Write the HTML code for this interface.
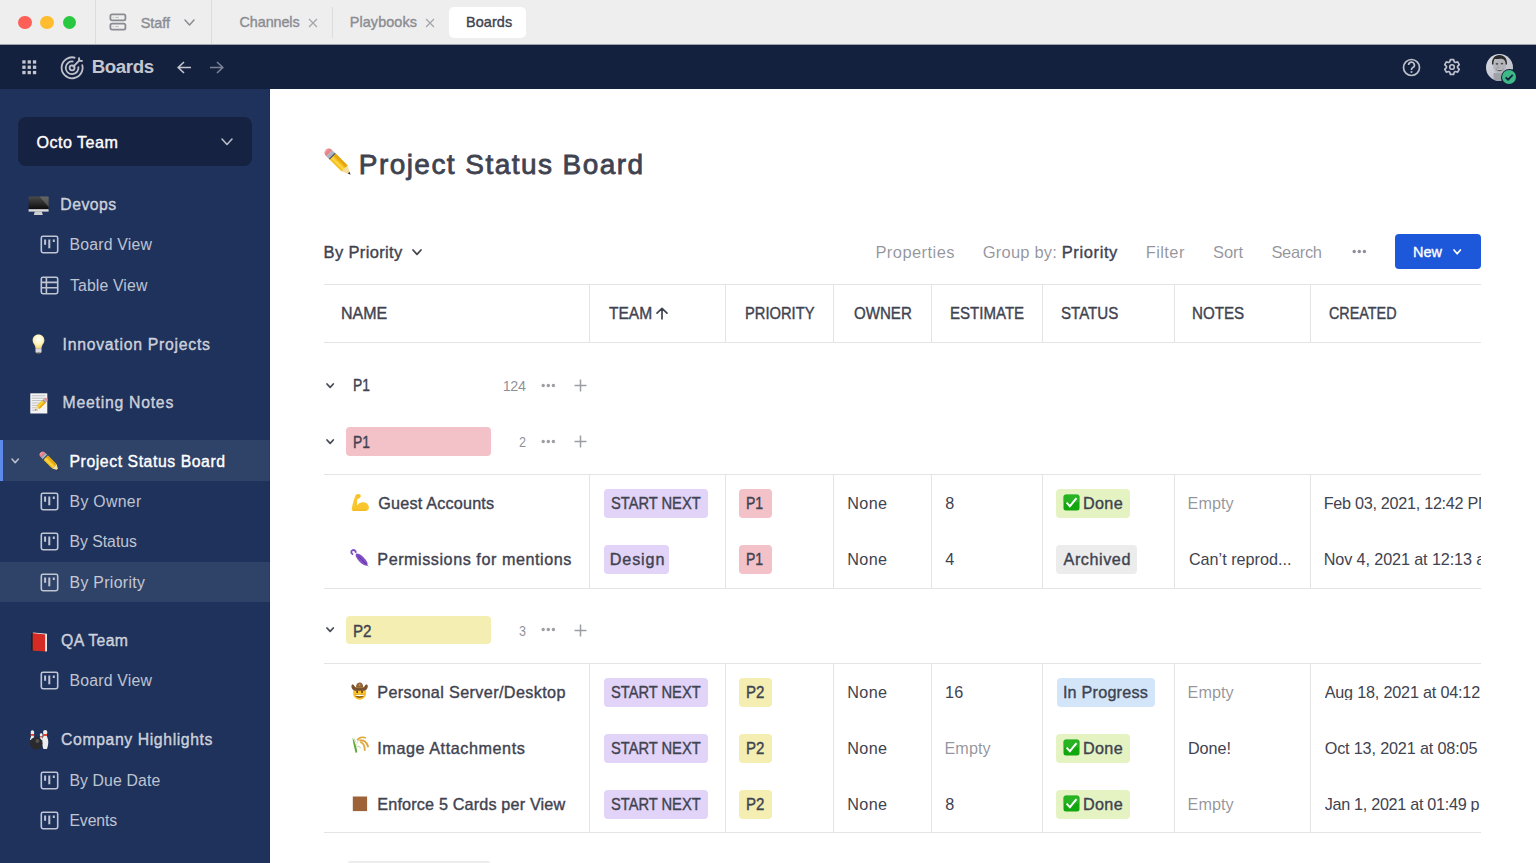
<!DOCTYPE html>
<html><head><meta charset="utf-8"><style>
*{margin:0;padding:0;box-sizing:border-box}
html,body{width:1536px;height:863px;overflow:hidden;background:#fff;font-family:"Liberation Sans",sans-serif}
.t{position:absolute;white-space:nowrap;line-height:1;transform-origin:0 0}
.box{position:absolute}
.ic{position:absolute;overflow:visible}
</style></head><body>
<div class="box" style="left:0;top:0;width:1536px;height:44px;background:#eeeeee"></div>
<div class="box" style="left:0;top:44px;width:1536px;height:1px;background:#a0a3ab"></div>
<div class="box" style="left:0;top:45px;width:1536px;height:44px;background:#14213e"></div>
<div class="box" style="left:0;top:89px;width:270px;height:774px;background:#1e325c"></div>
<div class="box" style="left:269px;top:89px;width:1px;height:774px;background:#1a2d55"></div>
<!-- traffic lights -->
<div class="box" style="left:18px;top:15.7px;width:13.6px;height:13.6px;border-radius:50%;background:#fe5f57"></div>
<div class="box" style="left:40.2px;top:15.7px;width:13.6px;height:13.6px;border-radius:50%;background:#febc2e"></div>
<div class="box" style="left:62.9px;top:15.7px;width:13.6px;height:13.6px;border-radius:50%;background:#28c840"></div>
<div class="box" style="left:95px;top:0;width:1px;height:44px;background:#dcdcdc"></div>
<div class="box" style="left:211px;top:0;width:1px;height:44px;background:#dcdcdc"></div>
<div class="box" style="left:332px;top:7px;width:1px;height:31px;background:#dcdcdc"></div>
<svg class="ic" style="left:109px;top:13.2px" width="18" height="18" viewBox="0 0 18 18"><rect x="1.4" y="1.3" width="15" height="6.1" rx="1.6" fill="none" stroke="#8b8c93" stroke-width="1.8"/><rect x="1.4" y="10.6" width="15" height="6.1" rx="1.6" fill="none" stroke="#8b8c93" stroke-width="1.8"/><path d="M3.8 4.4h1M6.4 4.4h3.2M3.8 13.6h1M6.4 13.6h3.2" stroke="#b0b1b6" stroke-width="0.9"/></svg>
<svg class="ic" style="left:182.5px;top:18px" width="13" height="9" viewBox="-2 -2 13 9"><path d="M0 0L4.5 5L9 0" fill="none" stroke="#8b8c93" stroke-width="1.5" stroke-linecap="round" stroke-linejoin="round"/></svg>
<svg class="ic" style="left:307.5px;top:17.5px" width="10" height="10" viewBox="0 0 10 10"><path d="M1 1L9 9M9 1L1 9" stroke="#a3a4aa" stroke-width="1.2"/></svg>
<svg class="ic" style="left:424.5px;top:17.5px" width="10" height="10" viewBox="0 0 10 10"><path d="M1 1L9 9M9 1L1 9" stroke="#a3a4aa" stroke-width="1.2"/></svg>
<div class="box" style="left:448.5px;top:6.7px;width:77.3px;height:31.4px;border-radius:5px;background:#ffffff"></div>
<!-- header icons -->
<svg class="ic" style="left:22px;top:60px" width="15" height="15" viewBox="0 0 15 15"><g fill="#c3c6cf"><rect x="0.3" y="0.3" width="3.3" height="3.3"/><rect x="5.6" y="0.3" width="3.3" height="3.3"/><rect x="10.9" y="0.3" width="3.3" height="3.3"/><rect x="0.3" y="5.6" width="3.3" height="3.3"/><rect x="5.6" y="5.6" width="3.3" height="3.3"/><rect x="10.9" y="5.6" width="3.3" height="3.3"/><rect x="0.3" y="10.9" width="3.3" height="3.3"/><rect x="5.6" y="10.9" width="3.3" height="3.3"/><rect x="10.9" y="10.9" width="3.3" height="3.3"/></g></svg>
<svg class="ic" style="left:60px;top:55.5px" width="24" height="24" viewBox="0 0 24 24"><g fill="none" stroke="#bfc2cc" stroke-width="1.8" stroke-linecap="butt"><path d="M22.09 8.56A10.5 10.5 0 1 1 15.34 1.81 M18.36 10.47A6.4 6.4 0 1 1 13.43 5.54"/><circle cx="12.1" cy="11.8" r="2.5"/><path d="M13.30 10.60L19.6 4.2" stroke-linecap="round"/><path d="M18.9 1.4L19.2 4.7L22.6 5" stroke-linejoin="miter"/></g></svg>
<svg class="ic" style="left:177px;top:61px" width="15" height="13" viewBox="0 0 15 13"><path d="M14 6.5H1.5M7 1L1.2 6.5L7 12" fill="none" stroke="#c3c6cf" stroke-width="1.6"/></svg>
<svg class="ic" style="left:209px;top:61px" width="15" height="13" viewBox="0 0 15 13"><path d="M1 6.5H13.5M8 1L13.8 6.5L8 12" fill="none" stroke="#7b8296" stroke-width="1.6"/></svg>
<svg class="ic" style="left:1402.1px;top:57.9px" width="19" height="19" viewBox="0 0 19 19"><circle cx="9.5" cy="9.5" r="8" fill="none" stroke="#bcc0cb" stroke-width="1.7"/><path d="M6.6 7.1a2.9 2.9 0 1 1 4.3 2.5c-.9.5-1.4 1-1.4 2v.5" fill="none" stroke="#bcc0cb" stroke-width="1.7"/><circle cx="9.5" cy="14" r="1.05" fill="#bcc0cb"/></svg>
<svg class="ic" style="left:1443px;top:58.4px" width="18" height="18" viewBox="0 0 18 18"><path d="M6.72 3.88 L7.42 1.57 L10.58 1.57 L11.28 3.88 L12.29 4.47 L14.65 3.91 L16.23 6.65 L14.57 8.41 L14.57 9.59 L16.23 11.35 L14.65 14.09 L12.29 13.53 L11.28 14.12 L10.58 16.43 L7.42 16.43 L6.72 14.12 L5.71 13.53 L3.35 14.09 L1.77 11.35 L3.43 9.59 L3.43 8.41 L1.77 6.65 L3.35 3.91 L5.71 4.47Z" fill="none" stroke="#bcc0cb" stroke-width="1.7" stroke-linejoin="round"/><circle cx="9" cy="9" r="2.3" fill="none" stroke="#bcc0cb" stroke-width="1.6"/></svg>
<svg class="ic" style="left:1485.5px;top:53.6px" width="27" height="27" viewBox="0 0 27 27"><defs><clipPath id="av"><circle cx="13.5" cy="13.5" r="13.5"/></clipPath><linearGradient id="avbg" x1="0" y1="0" x2="1" y2="1"><stop offset="0" stop-color="#d6d9e2"/><stop offset="1" stop-color="#b9bcc6"/></linearGradient></defs><g clip-path="url(#av)"><rect width="27" height="27" fill="url(#avbg)"/><path d="M7.6 19c-.4 3 .2 6 .8 8h8c.4-2 .6-5 .2-8z" fill="#9fa1a8"/><ellipse cx="13.6" cy="11.6" rx="6.4" ry="8" fill="#b4b5bb"/><path d="M6 10.5C5.4 5.2 8.6 1 13.4 1c4.8 0 8 3.4 7.6 9.6l-1.4-.2c.2-3.2-1.6-5.4-4.2-5.6-2.4-.2-4.6.4-6.6.2-.8 1.2-1.4 3-1.4 5.6z" fill="#2b2a2c"/><ellipse cx="11" cy="9.8" rx="1.3" ry="0.9" fill="#4a4a4e"/><ellipse cx="16" cy="9.6" rx="1.3" ry="0.9" fill="#4a4a4e"/><path d="M9.8 14.2c2.4 1.8 5.4 1.8 7.8 0-.6 2-2.2 3-3.9 3s-3.3-1-3.9-3z" fill="#5c5c61"/><path d="M10.4 14.5c2 1 4.6 1 6.6 0l-.4.9c-1.8.6-4 .6-5.8 0z" fill="#e4e4e8"/><path d="M12 11.5l-.6 2.2h2" stroke="#8f9096" stroke-width="0.6" fill="none"/></g></svg>
<div class="box" style="left:1500.5px;top:68.5px;width:17.5px;height:17.5px;border-radius:50%;background:#14213e"></div>
<div class="box" style="left:1502.2px;top:70.2px;width:14.2px;height:14.2px;border-radius:50%;background:#3db887"></div>
<svg class="ic" style="left:1502.2px;top:70.2px" width="14.2" height="14.2" viewBox="0 0 14 14"><path d="M3.6 7.2l2.4 2.4 4.6-4.8" fill="none" stroke="#14213e" stroke-width="1.8"/></svg>
<!-- sidebar -->
<div class="box" style="left:18px;top:116.8px;width:233.7px;height:49.4px;border-radius:8px;background:#162241"></div>
<svg class="ic" style="left:220px;top:137px" width="14" height="9.5" viewBox="-2 -2 14 9.5"><path d="M0 0L5.0 5.5L10 0" fill="none" stroke="#b7bcc8" stroke-width="1.6" stroke-linecap="round" stroke-linejoin="round"/></svg>
<div class="box" style="left:0;top:440px;width:270px;height:40.6px;background:rgba(255,255,255,0.08)"></div>
<div class="box" style="left:0;top:440px;width:3px;height:40.6px;background:#5d89ea"></div>
<div class="box" style="left:0;top:562px;width:270px;height:40px;background:rgba(255,255,255,0.08)"></div>
<svg class="ic" style="left:10.4px;top:457.0px" width="10.4" height="7.6" viewBox="-2 -2 10.4 7.6"><path d="M0 0L3.2 3.6L6.4 0" fill="none" stroke="#b7bcc8" stroke-width="1.6" stroke-linecap="round" stroke-linejoin="round"/></svg>
<svg class="ic" style="left:40px;top:235.0px" width="19" height="19" viewBox="0 0 19 19"><rect x="1.3" y="1.3" width="16.4" height="16.4" rx="1.6" fill="none" stroke="#c0c5d1" stroke-width="1.6"/><rect x="4.1" y="4.5" width="2" height="5.3" fill="#c0c5d1"/><rect x="8.3" y="4.5" width="2" height="8.8" fill="#c0c5d1"/><rect x="12.8" y="4.5" width="2" height="2.5" fill="#c0c5d1"/></svg><svg class="ic" style="left:40px;top:492.0px" width="19" height="19" viewBox="0 0 19 19"><rect x="1.3" y="1.3" width="16.4" height="16.4" rx="1.6" fill="none" stroke="#c0c5d1" stroke-width="1.6"/><rect x="4.1" y="4.5" width="2" height="5.3" fill="#c0c5d1"/><rect x="8.3" y="4.5" width="2" height="8.8" fill="#c0c5d1"/><rect x="12.8" y="4.5" width="2" height="2.5" fill="#c0c5d1"/></svg><svg class="ic" style="left:40px;top:532.0px" width="19" height="19" viewBox="0 0 19 19"><rect x="1.3" y="1.3" width="16.4" height="16.4" rx="1.6" fill="none" stroke="#c0c5d1" stroke-width="1.6"/><rect x="4.1" y="4.5" width="2" height="5.3" fill="#c0c5d1"/><rect x="8.3" y="4.5" width="2" height="8.8" fill="#c0c5d1"/><rect x="12.8" y="4.5" width="2" height="2.5" fill="#c0c5d1"/></svg><svg class="ic" style="left:40px;top:572.5px" width="19" height="19" viewBox="0 0 19 19"><rect x="1.3" y="1.3" width="16.4" height="16.4" rx="1.6" fill="none" stroke="#c0c5d1" stroke-width="1.6"/><rect x="4.1" y="4.5" width="2" height="5.3" fill="#c0c5d1"/><rect x="8.3" y="4.5" width="2" height="8.8" fill="#c0c5d1"/><rect x="12.8" y="4.5" width="2" height="2.5" fill="#c0c5d1"/></svg><svg class="ic" style="left:40px;top:671.3000000000001px" width="19" height="19" viewBox="0 0 19 19"><rect x="1.3" y="1.3" width="16.4" height="16.4" rx="1.6" fill="none" stroke="#c0c5d1" stroke-width="1.6"/><rect x="4.1" y="4.5" width="2" height="5.3" fill="#c0c5d1"/><rect x="8.3" y="4.5" width="2" height="8.8" fill="#c0c5d1"/><rect x="12.8" y="4.5" width="2" height="2.5" fill="#c0c5d1"/></svg><svg class="ic" style="left:40px;top:770.5px" width="19" height="19" viewBox="0 0 19 19"><rect x="1.3" y="1.3" width="16.4" height="16.4" rx="1.6" fill="none" stroke="#c0c5d1" stroke-width="1.6"/><rect x="4.1" y="4.5" width="2" height="5.3" fill="#c0c5d1"/><rect x="8.3" y="4.5" width="2" height="8.8" fill="#c0c5d1"/><rect x="12.8" y="4.5" width="2" height="2.5" fill="#c0c5d1"/></svg><svg class="ic" style="left:40px;top:810.6px" width="19" height="19" viewBox="0 0 19 19"><rect x="1.3" y="1.3" width="16.4" height="16.4" rx="1.6" fill="none" stroke="#c0c5d1" stroke-width="1.6"/><rect x="4.1" y="4.5" width="2" height="5.3" fill="#c0c5d1"/><rect x="8.3" y="4.5" width="2" height="8.8" fill="#c0c5d1"/><rect x="12.8" y="4.5" width="2" height="2.5" fill="#c0c5d1"/></svg><svg class="ic" style="left:40px;top:275.59999999999997px" width="19" height="19" viewBox="0 0 19 19"><rect x="1.3" y="1.3" width="16.4" height="16.4" rx="1.6" fill="none" stroke="#c0c5d1" stroke-width="1.6"/><path d="M1.3 6.4H17.7M1.3 11.8H17.7M6.4 1.3V17.7" stroke="#c0c5d1" stroke-width="1.6"/></svg>
<!-- main -->
<div class="box" style="left:1394.7px;top:233.9px;width:86.4px;height:35.6px;border-radius:4px;background:#1c58d9"></div>
<svg class="ic" style="left:1451.8px;top:247.6px" width="10.4" height="7.8" viewBox="-2 -2 10.4 7.8"><path d="M0 0L3.2 3.8L6.4 0" fill="none" stroke="#ffffff" stroke-width="1.7" stroke-linecap="round" stroke-linejoin="round"/></svg>
<svg class="ic" style="left:411px;top:247.6px" width="12" height="8.4" viewBox="-2 -2 12 8.4"><path d="M0 0L4.0 4.4L8 0" fill="none" stroke="#44474f" stroke-width="1.8" stroke-linecap="round" stroke-linejoin="round"/></svg>
<svg class="ic" style="left:1351.5px;top:249px" width="16" height="5" viewBox="0 0 16 5"><circle cx="2.2" cy="2.5" r="1.7" fill="#8c8f98"/><circle cx="7.3" cy="2.5" r="1.7" fill="#8c8f98"/><circle cx="12.4" cy="2.5" r="1.7" fill="#8c8f98"/></svg>
<svg class="ic" style="left:655px;top:307px" width="14" height="13" viewBox="0 0 14 13"><path d="M2 6.2L7 1.3L12 6.2M7 1.3V11.8" fill="none" stroke="#3f4350" stroke-width="1.7" stroke-linecap="round" stroke-linejoin="round"/></svg>
<div class="box" style="left:324px;top:283.5px;width:1157px;height:1px;background:#e4e4e6"></div><div class="box" style="left:324px;top:342px;width:1157px;height:1px;background:#e4e4e6"></div><div class="box" style="left:324px;top:474px;width:1157px;height:1px;background:#e4e4e6"></div><div class="box" style="left:324px;top:587.5px;width:1157px;height:1px;background:#e4e4e6"></div><div class="box" style="left:324px;top:663px;width:1157px;height:1px;background:#e4e4e6"></div><div class="box" style="left:324px;top:832px;width:1157px;height:1px;background:#e4e4e6"></div><div class="box" style="left:589px;top:284px;width:1px;height:58px;background:#e4e4e6"></div><div class="box" style="left:589px;top:474.5px;width:1px;height:113.0px;background:#e4e4e6"></div><div class="box" style="left:589px;top:663.5px;width:1px;height:168.5px;background:#e4e4e6"></div><div class="box" style="left:725px;top:284px;width:1px;height:58px;background:#e4e4e6"></div><div class="box" style="left:725px;top:474.5px;width:1px;height:113.0px;background:#e4e4e6"></div><div class="box" style="left:725px;top:663.5px;width:1px;height:168.5px;background:#e4e4e6"></div><div class="box" style="left:833px;top:284px;width:1px;height:58px;background:#e4e4e6"></div><div class="box" style="left:833px;top:474.5px;width:1px;height:113.0px;background:#e4e4e6"></div><div class="box" style="left:833px;top:663.5px;width:1px;height:168.5px;background:#e4e4e6"></div><div class="box" style="left:931px;top:284px;width:1px;height:58px;background:#e4e4e6"></div><div class="box" style="left:931px;top:474.5px;width:1px;height:113.0px;background:#e4e4e6"></div><div class="box" style="left:931px;top:663.5px;width:1px;height:168.5px;background:#e4e4e6"></div><div class="box" style="left:1042px;top:284px;width:1px;height:58px;background:#e4e4e6"></div><div class="box" style="left:1042px;top:474.5px;width:1px;height:113.0px;background:#e4e4e6"></div><div class="box" style="left:1042px;top:663.5px;width:1px;height:168.5px;background:#e4e4e6"></div><div class="box" style="left:1173.5px;top:284px;width:1px;height:58px;background:#e4e4e6"></div><div class="box" style="left:1173.5px;top:474.5px;width:1px;height:113.0px;background:#e4e4e6"></div><div class="box" style="left:1173.5px;top:663.5px;width:1px;height:168.5px;background:#e4e4e6"></div><div class="box" style="left:1309.5px;top:284px;width:1px;height:58px;background:#e4e4e6"></div><div class="box" style="left:1309.5px;top:474.5px;width:1px;height:113.0px;background:#e4e4e6"></div><div class="box" style="left:1309.5px;top:663.5px;width:1px;height:168.5px;background:#e4e4e6"></div>
<div class="box" style="left:346.2px;top:426.8px;width:144.8px;height:29.30000000000001px;background:#f3c1c8;border-radius:4px"></div><div class="box" style="left:346.2px;top:615.8px;width:144.8px;height:28.700000000000045px;background:#f4eeb3;border-radius:4px"></div><div class="box" style="left:603.5px;top:488.5px;width:104.5px;height:29.5px;background:#e2d3f8;border-radius:4px"></div><div class="box" style="left:739.4px;top:488.5px;width:32.60000000000002px;height:29.5px;background:#f3c1c8;border-radius:4px"></div><div class="box" style="left:1056.3px;top:488.5px;width:74.20000000000005px;height:29.5px;background:#e5f3c3;border-radius:4px"></div><svg class="ic" style="left:1062.5px;top:493.8px" width="17" height="17" viewBox="0 0 17 17"><rect x="0.5" y="0.5" width="16" height="16" rx="2.5" fill="#13a70e"/><rect x="0.5" y="0.5" width="16" height="8" rx="2.5" fill="#3cc035" opacity="0.5"/><path d="M3.6 8.6l3.3 3.6 6.6-8" fill="none" stroke="#fff" stroke-width="2"/></svg><div class="box" style="left:603.5px;top:544.5px;width:65.5px;height:29.5px;background:#e2d3f8;border-radius:4px"></div><div class="box" style="left:739.4px;top:544.5px;width:32.60000000000002px;height:29.5px;background:#f3c1c8;border-radius:4px"></div><div class="box" style="left:1056.3px;top:544.5px;width:80.79999999999995px;height:29.5px;background:#ececed;border-radius:4px"></div><div class="box" style="left:603.5px;top:677.5px;width:104.5px;height:29.5px;background:#e2d3f8;border-radius:4px"></div><div class="box" style="left:739.4px;top:677.5px;width:32.60000000000002px;height:29.5px;background:#f4eeb3;border-radius:4px"></div><div class="box" style="left:1057px;top:677.5px;width:98px;height:29.5px;background:#d3e6f9;border-radius:4px"></div><div class="box" style="left:603.5px;top:733.5px;width:104.5px;height:29.5px;background:#e2d3f8;border-radius:4px"></div><div class="box" style="left:739.4px;top:733.5px;width:32.60000000000002px;height:29.5px;background:#f4eeb3;border-radius:4px"></div><div class="box" style="left:1056.3px;top:733.5px;width:74.20000000000005px;height:29.5px;background:#e5f3c3;border-radius:4px"></div><svg class="ic" style="left:1062.5px;top:738.8px" width="17" height="17" viewBox="0 0 17 17"><rect x="0.5" y="0.5" width="16" height="16" rx="2.5" fill="#13a70e"/><rect x="0.5" y="0.5" width="16" height="8" rx="2.5" fill="#3cc035" opacity="0.5"/><path d="M3.6 8.6l3.3 3.6 6.6-8" fill="none" stroke="#fff" stroke-width="2"/></svg><div class="box" style="left:603.5px;top:789.5px;width:104.5px;height:29.5px;background:#e2d3f8;border-radius:4px"></div><div class="box" style="left:739.4px;top:789.5px;width:32.60000000000002px;height:29.5px;background:#f4eeb3;border-radius:4px"></div><div class="box" style="left:1056.3px;top:789.5px;width:74.20000000000005px;height:29.5px;background:#e5f3c3;border-radius:4px"></div><svg class="ic" style="left:1062.5px;top:794.8px" width="17" height="17" viewBox="0 0 17 17"><rect x="0.5" y="0.5" width="16" height="16" rx="2.5" fill="#13a70e"/><rect x="0.5" y="0.5" width="16" height="8" rx="2.5" fill="#3cc035" opacity="0.5"/><path d="M3.6 8.6l3.3 3.6 6.6-8" fill="none" stroke="#fff" stroke-width="2"/></svg>
<svg class="ic" style="left:325.1px;top:381.8px" width="10.3" height="7.4" viewBox="-2 -2 10.3 7.4"><path d="M0 0L3.15 3.4L6.3 0" fill="none" stroke="#4a4e59" stroke-width="1.8" stroke-linecap="round" stroke-linejoin="round"/></svg><svg class="ic" style="left:541.3px;top:382.8px" width="16" height="5" viewBox="0 0 16 5"><circle cx="2.2" cy="2.5" r="1.7" fill="#9c9ea4"/><circle cx="7.3" cy="2.5" r="1.7" fill="#9c9ea4"/><circle cx="12.4" cy="2.5" r="1.7" fill="#9c9ea4"/></svg><svg class="ic" style="left:573.5px;top:379.0px" width="13" height="13" viewBox="0 0 13 13"><path d="M6.5 0.5V12.5M0.5 6.5H12.5" stroke="#9c9ea4" stroke-width="1.5"/></svg><svg class="ic" style="left:325.1px;top:437.8px" width="10.3" height="7.4" viewBox="-2 -2 10.3 7.4"><path d="M0 0L3.15 3.4L6.3 0" fill="none" stroke="#4a4e59" stroke-width="1.8" stroke-linecap="round" stroke-linejoin="round"/></svg><svg class="ic" style="left:541.3px;top:438.8px" width="16" height="5" viewBox="0 0 16 5"><circle cx="2.2" cy="2.5" r="1.7" fill="#9c9ea4"/><circle cx="7.3" cy="2.5" r="1.7" fill="#9c9ea4"/><circle cx="12.4" cy="2.5" r="1.7" fill="#9c9ea4"/></svg><svg class="ic" style="left:573.5px;top:435.0px" width="13" height="13" viewBox="0 0 13 13"><path d="M6.5 0.5V12.5M0.5 6.5H12.5" stroke="#9c9ea4" stroke-width="1.5"/></svg><svg class="ic" style="left:325.1px;top:626.3px" width="10.3" height="7.4" viewBox="-2 -2 10.3 7.4"><path d="M0 0L3.15 3.4L6.3 0" fill="none" stroke="#4a4e59" stroke-width="1.8" stroke-linecap="round" stroke-linejoin="round"/></svg><svg class="ic" style="left:541.3px;top:627.3px" width="16" height="5" viewBox="0 0 16 5"><circle cx="2.2" cy="2.5" r="1.7" fill="#9c9ea4"/><circle cx="7.3" cy="2.5" r="1.7" fill="#9c9ea4"/><circle cx="12.4" cy="2.5" r="1.7" fill="#9c9ea4"/></svg><svg class="ic" style="left:573.5px;top:623.5px" width="13" height="13" viewBox="0 0 13 13"><path d="M6.5 0.5V12.5M0.5 6.5H12.5" stroke="#9c9ea4" stroke-width="1.5"/></svg>
<svg class="ic" style="left:27.5px;top:195.5px" width="21" height="20" viewBox="0 0 21 20"><defs><linearGradient id="scr" x1="0" y1="0" x2="0" y2="1"><stop offset="0" stop-color="#4a4a4a"/><stop offset="1" stop-color="#0d0d0d"/></linearGradient></defs><rect x="0.6" y="0.6" width="20" height="12.8" rx="0.6" fill="url(#scr)"/><path d="M11.5 0.6H20.6V11z" fill="#8a8a8a" opacity="0.45"/><rect x="0.6" y="13.2" width="20" height="2.4" fill="#dcdcdc"/><path d="M6.8 15.6H13.8L14.8 19H5.8z" fill="#cfcfcf"/></svg><svg class="ic" style="left:32px;top:334px" width="13" height="20" viewBox="0 0 13 20"><defs><radialGradient id="blb" cx="0.5" cy="0.35" r="0.6"><stop offset="0" stop-color="#ffffff"/><stop offset="0.55" stop-color="#fff6c4"/><stop offset="1" stop-color="#f3d77a"/></radialGradient></defs><path d="M6.5 0.4C10 0.4 12.4 3 12.4 6.2c0 2.4-1.4 3.6-2.2 5.2-.6 1.2-.7 2.4-.7 3.4H3.5c0-1-.1-2.2-.7-3.4C2 9.8.6 8.6.6 6.2.6 3 3 .4 6.5.4z" fill="url(#blb)"/><rect x="3.5" y="14.6" width="6" height="4.2" rx="0.8" fill="#d8d8dc"/><rect x="4.6" y="18.4" width="3.8" height="1.2" rx="0.6" fill="#9a7a50"/></svg><svg class="ic" style="left:29.5px;top:392.6px" width="20" height="21" viewBox="0 0 20 21"><rect x="0.3" y="0.3" width="17" height="20.2" fill="#f4f4f4"/><path d="M1.8 2.8h13.5M1.8 5.2h13M1.8 7.6h11M1.8 10h9M1.8 12.4h8M1.8 14.8h6M1.8 17.2h6" stroke="#a3a8ae" stroke-width="0.7"/></svg><svg class="ic" style="left:35.2px;top:398.4px" width="12.5" height="12.5" viewBox="0 0 28 28"><g transform="translate(14 14) rotate(45) translate(-4.6 -19.5)"><path d="M0 5.5A4.6 4.6 0 0 1 9.2 5.5V6.5H0z" fill="#e8868a"/><path d="M2 2.2A3 2 0 0 1 6 2.2" stroke="#f6b7b9" stroke-width="1.2" fill="none"/><rect x="0" y="6.5" width="9.2" height="3.6" fill="#a6b3c3"/><rect x="0" y="10.1" width="9.2" height="1.6" fill="#4d4f55"/><rect x="0" y="11.7" width="9.2" height="18" fill="#f7c01c"/><rect x="6.2" y="11.7" width="3" height="18" fill="#e3a612"/><rect x="2.2" y="11.7" width="2.2" height="18" fill="#fbd54a"/><path d="M0 29.7H9.2L5.6 36.4H3.6z" fill="#f5dc9c"/><path d="M3.3 35.8H5.9L4.6 39z" fill="#2e2e33"/></g></svg><svg class="ic" style="left:40px;top:451.5px" width="19" height="19" viewBox="0 0 28 28"><g transform="translate(14 14) rotate(-45) translate(-4.6 -19.5)"><path d="M0 5.5A4.6 4.6 0 0 1 9.2 5.5V6.5H0z" fill="#e8868a"/><path d="M2 2.2A3 2 0 0 1 6 2.2" stroke="#f6b7b9" stroke-width="1.2" fill="none"/><rect x="0" y="6.5" width="9.2" height="3.6" fill="#a6b3c3"/><rect x="0" y="10.1" width="9.2" height="1.6" fill="#4d4f55"/><rect x="0" y="11.7" width="9.2" height="18" fill="#f7c01c"/><rect x="6.2" y="11.7" width="3" height="18" fill="#e3a612"/><rect x="2.2" y="11.7" width="2.2" height="18" fill="#fbd54a"/><path d="M0 29.7H9.2L5.6 36.4H3.6z" fill="#f5dc9c"/><path d="M3.3 35.8H5.9L4.6 39z" fill="#2e2e33"/></g></svg><svg class="ic" style="left:30.5px;top:631.5px" width="16" height="20" viewBox="0 0 16 20"><path d="M2 0.5L15.8 1.8V19.2L2 18z" fill="#ececec"/><path d="M1.2 1L14.4 2.4V19.6L1.2 18.4z" fill="#d42c24"/><path d="M0.2 1.2H1.6V18.6H0.2z" fill="#1f1a1a"/><path d="M14.4 2.4L15.8 1.8V19.2L14.4 19.6z" fill="#f4f4f4"/></svg><svg class="ic" style="left:28.5px;top:729.5px" width="20" height="20" viewBox="0 0 20 20"><g fill="#ececec"><path d="M3.2 0.3c1.2 0 2 .8 2 2.1 0 1.3-.6 1.8-.5 3 .1 1.3 1 2.5 1.2 4.5H1c.2-2 1.1-3.2 1.2-4.5.1-1.2-.5-1.7-.5-3 0-1.3.8-2.1 1.5-2.1z"/><path d="M16.2 0c1.2 0 2.1.9 2.1 2.2 0 1.4-.7 1.9-.6 3.2.1 1.4 1.6 3 1.6 6.4 0 3.2-.8 6-1.4 7.2H14.5c-.6-1.2-1.4-4-1.4-7.2 0-3.4 1.5-5 1.6-6.4.1-1.3-.6-1.8-.6-3.2C14.1.9 15 0 16.2 0z"/><path d="M12.2 3.2c.8 0 1.4.6 1.4 1.6 0 .9-.4 1.3-.3 2.2.1.8.6 1.8.7 3h-3.6c.1-1.2.6-2.2.7-3 .1-.9-.3-1.3-.3-2.2 0-1 .6-1.6 1.4-1.6z"/></g><g fill="#e0452f"><rect x="1.6" y="4" width="3.6" height="1.8"/><rect x="14.2" y="4" width="3.8" height="2"/><rect x="11" y="6.2" width="2.4" height="1.2"/></g><circle cx="7.2" cy="13.3" r="6.3" fill="#2a2a2c"/><circle cx="8.4" cy="11" r="2" fill="#5c5c60" opacity="0.8"/></svg><svg class="ic" style="left:324.75px;top:149.4px" width="25.9" height="25.9" viewBox="0 0 28 28"><g transform="translate(14 14) rotate(-45) translate(-4.6 -19.5)"><path d="M0 5.5A4.6 4.6 0 0 1 9.2 5.5V6.5H0z" fill="#e8868a"/><path d="M2 2.2A3 2 0 0 1 6 2.2" stroke="#f6b7b9" stroke-width="1.2" fill="none"/><rect x="0" y="6.5" width="9.2" height="3.6" fill="#a6b3c3"/><rect x="0" y="10.1" width="9.2" height="1.6" fill="#4d4f55"/><rect x="0" y="11.7" width="9.2" height="18" fill="#f7c01c"/><rect x="6.2" y="11.7" width="3" height="18" fill="#e3a612"/><rect x="2.2" y="11.7" width="2.2" height="18" fill="#fbd54a"/><path d="M0 29.7H9.2L5.6 36.4H3.6z" fill="#f5dc9c"/><path d="M3.3 35.8H5.9L4.6 39z" fill="#2e2e33"/></g></svg><svg class="ic" style="left:351px;top:493px" width="19" height="19" viewBox="0 0 19 19"><path d="M4.2 3.2C4.6 1 7.6.2 9.2 1.6c1 1 .6 3-.8 3.6L6.4 6.2c-.5 2.3-.5 4.4-.1 6.4 1.4-2.6 4.2-3.6 6.5-3.3 2.8.4 5 2.5 5.1 5.3.1 2-1.3 3.3-3.5 3.3H2.2C1 17.9.6 16.9.8 15.4 1.6 11 2.8 6.6 4.2 3.2z" fill="#f9c62d"/><path d="M6 3.2c.8-.6 1.8-.6 2.4 0" stroke="#e9ab1c" stroke-width="0.7" fill="none"/><path d="M2.4 16.9c3.6.3 8 .3 12.4 0" stroke="#eab022" stroke-width="0.8" fill="none"/></svg><svg class="ic" style="left:350px;top:547.5px" width="20" height="20" viewBox="0 0 20 20"><path d="M2.4 6C.8 5.2 1 2.6 2.8 2.1c1.5-.4 2.8.6 2.9 2" fill="none" stroke="#7c4cc4" stroke-width="1.9" stroke-linecap="round"/><path d="M5.6 4.4l1 1" stroke="#8d8d93" stroke-width="0.9"/><ellipse cx="11.6" cy="11.6" rx="8" ry="3" transform="rotate(45 11.6 11.6)" fill="#8150c6"/><path d="M8 7.4c2.2 2.8 4.8 5.6 9 9.2" stroke="#5b2f9a" stroke-width="0.9" fill="none"/><path d="M16.8 16.8l1.6 1.6" stroke="#8d8d93" stroke-width="1"/></svg><svg class="ic" style="left:351px;top:682px" width="18" height="18" viewBox="0 0 18 18"><circle cx="8.6" cy="11.1" r="6.6" fill="#fbc528"/><path d="M.4 4.2C.4 2.8 1.5 2.3 2.4 2.8 3.4 3.4 3.5 5 5 5.4h7.2C13.7 5 13.8 3.4 14.8 2.8c.9-.5 2 0 2 1.4 0 2.4-1.8 4.2-3.4 4.6H3.8C2.2 8.4.4 6.6.4 4.2z" fill="#7a5230"/><path d="M5 5.6C5 2.6 6 .4 8.6.4s3.6 2.2 3.6 5.2z" fill="#8f6438"/><path d="M7.8 2.2h1.6v1.6H7.8z" fill="#c9a25a"/><ellipse cx="6.2" cy="9.8" rx="0.9" ry="1.5" fill="#6b4410"/><ellipse cx="11" cy="9.8" rx="0.9" ry="1.5" fill="#6b4410"/><path d="M3.6 12.3c3 .9 7 .9 10 0-.4 2.2-2.4 3.6-5 3.6s-4.6-1.4-5-3.6z" fill="#8a5a12"/><path d="M4 12.4c3 .8 6.4.8 9.4 0l-.3 1.3c-2.8.6-6 .6-8.8 0z" fill="#ffffff"/></svg><svg class="ic" style="left:350.5px;top:736px" width="19" height="19" viewBox="0 0 19 19"><path d="M1.4 1.6c.6 4.4 1.8 10.2 3.2 15.2l1.6-.2C5.8 12 4.2 6 1.4 1.6z" fill="#5aa832"/><path d="M3.2 2.6c.6 1 1 2.2 1.2 3.2" stroke="#9bd36a" stroke-width="0.8" fill="none"/><path d="M5.6 10.4c1.5-.4 3.2.2 4 1.8" stroke="#a6d886" stroke-width="1" fill="none"/><path d="M5.2 9.6C6 6 7.8 3.4 10.4 2.8" stroke="#e8dcc0" stroke-width="1" fill="none"/><path d="M6.6 3.6C9 1.2 12.4.8 14.2 1.8" stroke="#e2a93c" stroke-width="1.7" stroke-linecap="round" fill="none"/><path d="M9.2 4.6c3.4-.8 6.6 1.4 7.8 5.8" stroke="#dba53f" stroke-width="2" stroke-linecap="round" fill="none"/><path d="M10 6.4c2.2.6 3.6 3.6 3.8 7.6" stroke="#e3ae48" stroke-width="2" stroke-linecap="round" fill="none"/></svg><svg class="ic" style="left:352px;top:796px" width="16" height="16" viewBox="0 0 16 16"><rect x="0.8" y="0.5" width="14.3" height="14.6" fill="#9d6238"/></svg>
<div class="box" style="left:347.5px;top:861px;width:142px;height:4px;border-radius:3px;background:#ededee"></div>
<div class="t" style="left:140.70px;top:16.11px;font-size:14.4px;color:#8b8c93;letter-spacing:-0.035px;-webkit-text-stroke:0.38px #8b8c93">Staff</div>
<div class="t" style="left:239.60px;top:14.91px;font-size:14.4px;color:#8b8c93;letter-spacing:-0.115px;-webkit-text-stroke:0.38px #8b8c93">Channels</div>
<div class="t" style="left:349.80px;top:14.91px;font-size:14.4px;color:#8b8c93;letter-spacing:0.088px;-webkit-text-stroke:0.38px #8b8c93">Playbooks</div>
<div class="t" style="left:466.00px;top:14.91px;font-size:14.4px;color:#3f4350;letter-spacing:0.100px;-webkit-text-stroke:0.38px #3f4350">Boards</div>
<div class="t" style="left:91.70px;top:57.67px;font-size:18.7px;color:#c3c6cf;letter-spacing:-0.388px;font-weight:700">Boards</div>
<div class="t" style="left:36.40px;top:133.77px;font-size:16.1px;color:#ffffff;letter-spacing:0.487px;-webkit-text-stroke:0.38px #ffffff">Octo Team</div>
<div class="t" style="left:60.30px;top:196.92px;font-size:15.8px;color:rgba(255,255,255,0.72);letter-spacing:0.447px;-webkit-text-stroke:0.38px rgba(255,255,255,0.72)">Devops</div>
<div class="t" style="left:69.40px;top:237.12px;font-size:15.8px;color:rgba(255,255,255,0.72);letter-spacing:0.224px">Board View</div>
<div class="t" style="left:70.00px;top:277.62px;font-size:15.8px;color:rgba(255,255,255,0.72);letter-spacing:0.133px">Table View</div>
<div class="t" style="left:62.60px;top:336.82px;font-size:15.8px;color:rgba(255,255,255,0.72);letter-spacing:0.719px;-webkit-text-stroke:0.38px rgba(255,255,255,0.72)">Innovation Projects</div>
<div class="t" style="left:62.60px;top:395.32px;font-size:15.8px;color:rgba(255,255,255,0.72);letter-spacing:0.737px;-webkit-text-stroke:0.38px rgba(255,255,255,0.72)">Meeting Notes</div>
<div class="t" style="left:69.50px;top:454.12px;font-size:15.8px;color:#ffffff;letter-spacing:0.563px;-webkit-text-stroke:0.38px #ffffff">Project Status Board</div>
<div class="t" style="left:69.50px;top:494.12px;font-size:15.8px;color:rgba(255,255,255,0.72);letter-spacing:0.344px">By Owner</div>
<div class="t" style="left:69.50px;top:534.12px;font-size:15.8px;color:rgba(255,255,255,0.72);letter-spacing:-0.026px">By Status</div>
<div class="t" style="left:69.50px;top:574.62px;font-size:15.8px;color:rgba(255,255,255,0.72);letter-spacing:0.343px">By Priority</div>
<div class="t" style="left:61.00px;top:633.32px;font-size:15.8px;color:rgba(255,255,255,0.72);letter-spacing:0.386px;-webkit-text-stroke:0.38px rgba(255,255,255,0.72)">QA Team</div>
<div class="t" style="left:69.40px;top:673.42px;font-size:15.8px;color:rgba(255,255,255,0.72);letter-spacing:0.224px">Board View</div>
<div class="t" style="left:61.00px;top:732.12px;font-size:15.8px;color:rgba(255,255,255,0.72);letter-spacing:0.596px;-webkit-text-stroke:0.38px rgba(255,255,255,0.72)">Company Highlights</div>
<div class="t" style="left:69.40px;top:772.62px;font-size:15.8px;color:rgba(255,255,255,0.72);letter-spacing:0.123px">By Due Date</div>
<div class="t" style="left:69.40px;top:812.72px;font-size:15.8px;color:rgba(255,255,255,0.72);letter-spacing:-0.099px">Events</div>
<div class="t" style="left:358.80px;top:150.69px;font-size:28.0px;color:#3f4350;letter-spacing:1.446px;-webkit-text-stroke:0.8px #3f4350">Project Status Board</div>
<div class="t" style="left:323.60px;top:243.63px;font-size:16.5px;color:#3f4350;letter-spacing:0.347px;-webkit-text-stroke:0.38px #3f4350">By Priority</div>
<div class="t" style="left:875.40px;top:243.83px;font-size:16.5px;color:rgba(63,67,80,0.56);letter-spacing:0.439px">Properties</div>
<div class="t" style="left:982.80px;top:243.83px;font-size:16.5px;color:rgba(63,67,80,0.56);letter-spacing:0.191px">Group by:</div>
<div class="t" style="left:1061.75px;top:243.83px;font-size:16.5px;color:#3f4350;letter-spacing:0.609px;-webkit-text-stroke:0.38px #3f4350">Priority</div>
<div class="t" style="left:1145.70px;top:243.83px;font-size:16.5px;color:rgba(63,67,80,0.56);letter-spacing:0.406px">Filter</div>
<div class="t" style="left:1213.00px;top:243.83px;font-size:16.5px;color:rgba(63,67,80,0.56);letter-spacing:-0.059px">Sort</div>
<div class="t" style="left:1271.40px;top:243.83px;font-size:16.5px;color:rgba(63,67,80,0.56);letter-spacing:-0.341px">Search</div>
<div class="t" style="left:1412.64px;top:243.70px;font-size:15.0px;color:#ffffff;transform:scaleX(0.9632);-webkit-text-stroke:0.35px #ffffff">New</div>
<div class="t" style="left:341.29px;top:305.92px;font-size:15.8px;color:#3f4350;transform:scaleX(1.0113);-webkit-text-stroke:0.38px #3f4350">NAME</div>
<div class="t" style="left:609.00px;top:305.92px;font-size:15.8px;color:#3f4350;transform:scaleX(0.9831);-webkit-text-stroke:0.38px #3f4350">TEAM</div>
<div class="t" style="left:744.57px;top:305.92px;font-size:15.8px;color:#3f4350;transform:scaleX(0.9316);-webkit-text-stroke:0.38px #3f4350">PRIORITY</div>
<div class="t" style="left:853.60px;top:305.92px;font-size:15.8px;color:#3f4350;transform:scaleX(0.9544);-webkit-text-stroke:0.38px #3f4350">OWNER</div>
<div class="t" style="left:949.65px;top:305.92px;font-size:15.8px;color:#3f4350;transform:scaleX(0.9530);-webkit-text-stroke:0.38px #3f4350">ESTIMATE</div>
<div class="t" style="left:1061.30px;top:305.92px;font-size:15.8px;color:#3f4350;transform:scaleX(0.9557);-webkit-text-stroke:0.38px #3f4350">STATUS</div>
<div class="t" style="left:1192.44px;top:305.92px;font-size:15.8px;color:#3f4350;transform:scaleX(0.9569);-webkit-text-stroke:0.38px #3f4350">NOTES</div>
<div class="t" style="left:1329.00px;top:305.92px;font-size:15.8px;color:#3f4350;transform:scaleX(0.9093);-webkit-text-stroke:0.38px #3f4350">CREATED</div>
<div class="t" style="left:352.74px;top:377.48px;font-size:16.2px;color:#3f4350;transform:scaleX(0.8565);-webkit-text-stroke:0.38px #3f4350">P1</div>
<div class="t" style="left:502.80px;top:378.81px;font-size:14.4px;color:rgba(63,67,80,0.6);letter-spacing:-0.453px">124</div>
<div class="t" style="left:352.74px;top:433.78px;font-size:16.2px;color:#3f4350;transform:scaleX(0.8565);-webkit-text-stroke:0.38px #3f4350">P1</div>
<div class="t" style="left:518.60px;top:435.31px;font-size:14.4px;color:rgba(63,67,80,0.6);transform:scaleX(0.8750)">2</div>
<div class="t" style="left:352.66px;top:622.78px;font-size:16.2px;color:#3f4350;transform:scaleX(0.9363);-webkit-text-stroke:0.38px #3f4350">P2</div>
<div class="t" style="left:518.60px;top:624.31px;font-size:14.4px;color:rgba(63,67,80,0.6);transform:scaleX(0.8750)">3</div>
<div class="t" style="left:378.30px;top:495.28px;font-size:16.2px;color:#3f4350;letter-spacing:0.187px;-webkit-text-stroke:0.38px #3f4350">Guest Accounts</div>
<div class="t" style="left:610.70px;top:495.28px;font-size:16.2px;color:#3f4350;transform:scaleX(0.9059);-webkit-text-stroke:0.38px #3f4350">START NEXT</div>
<div class="t" style="left:746.13px;top:495.28px;font-size:16.2px;color:#3f4350;transform:scaleX(0.8672);-webkit-text-stroke:0.38px #3f4350">P1</div>
<div class="t" style="left:847.30px;top:495.28px;font-size:16.2px;color:#3f4350;letter-spacing:0.335px">None</div>
<div class="t" style="left:945.20px;top:495.28px;font-size:16.2px;color:#3f4350">8</div>
<div class="t" style="left:1083.00px;top:495.28px;font-size:16.2px;color:#3f4350;letter-spacing:0.335px;-webkit-text-stroke:0.38px #3f4350">Done</div>
<div class="t" style="left:1187.60px;top:495.28px;font-size:16.2px;color:rgba(63,67,80,0.56);letter-spacing:0.005px">Empty</div>
<div class="t" style="left:1323.70px;top:495.28px;font-size:16.2px;color:#3f4350;letter-spacing:-0.280px;width:157.3px;overflow:hidden">Feb 03, 2021, 12:42 PM</div>
<div class="t" style="left:377.30px;top:551.28px;font-size:16.2px;color:#3f4350;letter-spacing:0.534px;-webkit-text-stroke:0.38px #3f4350">Permissions for mentions</div>
<div class="t" style="left:609.70px;top:551.28px;font-size:16.2px;color:#3f4350;letter-spacing:0.883px;-webkit-text-stroke:0.38px #3f4350">Design</div>
<div class="t" style="left:746.13px;top:551.28px;font-size:16.2px;color:#3f4350;transform:scaleX(0.8672);-webkit-text-stroke:0.38px #3f4350">P1</div>
<div class="t" style="left:847.30px;top:551.28px;font-size:16.2px;color:#3f4350;letter-spacing:0.335px">None</div>
<div class="t" style="left:945.20px;top:551.28px;font-size:16.2px;color:#3f4350">4</div>
<div class="t" style="left:1063.60px;top:551.28px;font-size:16.2px;color:#3f4350;letter-spacing:0.546px;-webkit-text-stroke:0.38px #3f4350">Archived</div>
<div class="t" style="left:1188.90px;top:551.28px;font-size:16.2px;color:#3f4350;letter-spacing:0.002px">Can’t reprod...</div>
<div class="t" style="left:1323.70px;top:551.28px;font-size:16.2px;color:#3f4350;letter-spacing:-0.105px;width:157.3px;overflow:hidden">Nov 4, 2021 at 12:13 am</div>
<div class="t" style="left:377.30px;top:684.28px;font-size:16.2px;color:#3f4350;letter-spacing:0.375px;-webkit-text-stroke:0.38px #3f4350">Personal Server/Desktop</div>
<div class="t" style="left:610.70px;top:684.28px;font-size:16.2px;color:#3f4350;transform:scaleX(0.9059);-webkit-text-stroke:0.38px #3f4350">START NEXT</div>
<div class="t" style="left:746.07px;top:684.28px;font-size:16.2px;color:#3f4350;transform:scaleX(0.9310);-webkit-text-stroke:0.38px #3f4350">P2</div>
<div class="t" style="left:847.30px;top:684.28px;font-size:16.2px;color:#3f4350;letter-spacing:0.335px">None</div>
<div class="t" style="left:945.10px;top:684.28px;font-size:16.2px;color:#3f4350;letter-spacing:0.197px">16</div>
<div class="t" style="left:1062.90px;top:684.28px;font-size:16.2px;color:#3f4350;letter-spacing:0.217px;-webkit-text-stroke:0.38px #3f4350">In Progress</div>
<div class="t" style="left:1187.60px;top:684.28px;font-size:16.2px;color:rgba(63,67,80,0.56);letter-spacing:0.005px">Empty</div>
<div class="t" style="left:1324.70px;top:684.28px;font-size:16.2px;color:#3f4350;letter-spacing:-0.191px;width:156.3px;overflow:hidden">Aug 18, 2021 at 04:12 pm</div>
<div class="t" style="left:377.30px;top:740.28px;font-size:16.2px;color:#3f4350;letter-spacing:0.558px;-webkit-text-stroke:0.38px #3f4350">Image Attachments</div>
<div class="t" style="left:610.70px;top:740.28px;font-size:16.2px;color:#3f4350;transform:scaleX(0.9059);-webkit-text-stroke:0.38px #3f4350">START NEXT</div>
<div class="t" style="left:746.07px;top:740.28px;font-size:16.2px;color:#3f4350;transform:scaleX(0.9310);-webkit-text-stroke:0.38px #3f4350">P2</div>
<div class="t" style="left:847.30px;top:740.28px;font-size:16.2px;color:#3f4350;letter-spacing:0.335px">None</div>
<div class="t" style="left:944.50px;top:740.28px;font-size:16.2px;color:rgba(63,67,80,0.56);letter-spacing:0.055px">Empty</div>
<div class="t" style="left:1083.00px;top:740.28px;font-size:16.2px;color:#3f4350;letter-spacing:0.335px;-webkit-text-stroke:0.38px #3f4350">Done</div>
<div class="t" style="left:1187.90px;top:740.28px;font-size:16.2px;color:#3f4350;letter-spacing:-0.025px">Done!</div>
<div class="t" style="left:1324.70px;top:740.28px;font-size:16.2px;color:#3f4350;letter-spacing:-0.150px;width:156.3px;overflow:hidden">Oct 13, 2021 at 08:05 am</div>
<div class="t" style="left:377.30px;top:796.28px;font-size:16.2px;color:#3f4350;letter-spacing:0.163px;-webkit-text-stroke:0.38px #3f4350">Enforce 5 Cards per View</div>
<div class="t" style="left:610.70px;top:796.28px;font-size:16.2px;color:#3f4350;transform:scaleX(0.9059);-webkit-text-stroke:0.38px #3f4350">START NEXT</div>
<div class="t" style="left:746.07px;top:796.28px;font-size:16.2px;color:#3f4350;transform:scaleX(0.9310);-webkit-text-stroke:0.38px #3f4350">P2</div>
<div class="t" style="left:847.30px;top:796.28px;font-size:16.2px;color:#3f4350;letter-spacing:0.335px">None</div>
<div class="t" style="left:945.20px;top:796.28px;font-size:16.2px;color:#3f4350">8</div>
<div class="t" style="left:1083.00px;top:796.28px;font-size:16.2px;color:#3f4350;letter-spacing:0.335px;-webkit-text-stroke:0.38px #3f4350">Done</div>
<div class="t" style="left:1187.60px;top:796.28px;font-size:16.2px;color:rgba(63,67,80,0.56);letter-spacing:0.005px">Empty</div>
<div class="t" style="left:1324.70px;top:796.28px;font-size:16.2px;color:#3f4350;letter-spacing:-0.296px;width:156.3px;overflow:hidden">Jan 1, 2021 at 01:49 p</div>
</body></html>
